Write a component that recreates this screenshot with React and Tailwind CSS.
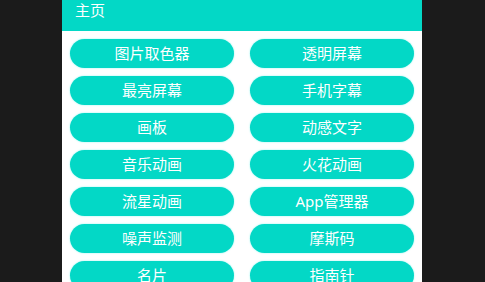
import React from 'react';

const items = [
    '图片取色器', '透明屏幕',
    '最亮屏幕', '手机字幕',
    '画板', '动感文字',
    '音乐动画', '火花动画',
    '流星动画', 'App管理器',
    '噪声监测', '摩斯码',
    '名片', '指南针',
];

export default function App() {
    return (
        <div className="w-[485px] h-[282px] overflow-hidden bg-[#1b1b1b] flex pl-[62px]" style={{ fontFamily: '"Noto Sans", "Noto Sans CJK SC", sans-serif' }}>
            <div className="w-[360px] bg-white flex flex-col">
                {/* Header */}
                <div className="h-[31px] bg-[#03d8c6] flex items-center px-[13px] text-white text-[15px] shrink-0">
                    <span className="-mt-[10px]">主页</span>
                </div>

                {/* Button grid */}
                <div className="grid grid-cols-2 gap-x-[16px] gap-y-[8px] px-[8px] pt-[8px]">
                    {items.map((label) => (
                        <button
                            key={label}
                            className="h-[29px] rounded-full bg-[#03d8c6] text-white text-[15px] leading-none flex items-center justify-center shadow-[0_0_2px_#8ff5ee]"
                        >
                            {label}
                        </button>
                    ))}
                </div>
            </div>
        </div>
    );
}
